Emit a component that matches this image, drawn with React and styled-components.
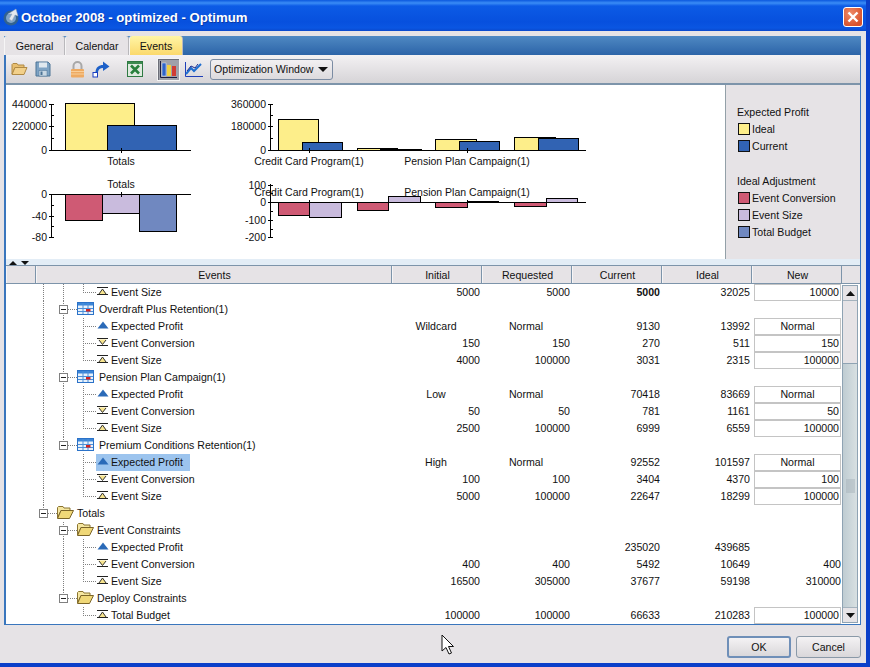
import React from 'react'
import styled, { createGlobalStyle } from 'styled-components'

const font = '"Liberation Sans", Arial, sans-serif'
const gray = '#e6e3e6'
const edge = '#3a76bd'
const yellow = '#fdee8a'
const blue = '#3163b3'
const red = '#cf5a74'
const purple = '#c9bbdd'
const steel = '#7088c0'

const Global = createGlobalStyle`
  html, body { margin: 0; padding: 0; background: ${gray}; }
  * { box-sizing: border-box; }
`
const Window = styled.div`
  position: relative;
  width: 870px;
  height: 667px;
  display: flex;
  flex-direction: column;
  overflow: hidden;
  background: ${gray};
  border-right: 4px solid #0b3fc9;
  border-bottom: 4px solid #0b3fc9;
  font: 10.6px ${font};
  color: #111;
`
const TitleBar = styled.header`
  height: 31px;
  margin-right: -4px;
  flex: none;
  display: flex;
  align-items: center;
  padding: 3px 7px 0 3px;
  background: linear-gradient(#0b58de 0, #3a8cf6 3px, #0c5be6 6px, #0750de 22px, #0a56e2 28px, #0a48cc 31px);
`
const Title = styled.h1`
  flex: 1;
  margin: 0 0 0 1px;
  font: bold 13.2px ${font};
  color: #fff;
  text-shadow: 1px 1px 0 #0a3aa8;
`
const CloseButton = styled.button`
  width: 20px;
  height: 20px;
  padding: 0;
  display: flex;
  align-items: center;
  justify-content: center;
  border: 1px solid #fff;
  border-radius: 3px;
  background: radial-gradient(circle at 35% 30%, #ef8a68, #d8522c 75%);
`
const Body = styled.div`
  flex: 1;
  min-height: 0;
  display: flex;
  flex-direction: column;
  padding: 5px 5px 0 4px;
`
const Panel = styled.main`
  height: 589px;
  flex: none;
  display: flex;
  flex-direction: column;
  border-left: 2px solid ${edge};
  border-right: 1px solid ${edge};
  border-bottom: 1px solid ${edge};
  background: #fff;
`
const TabStrip = styled.nav`
  height: 19px;
  flex: none;
  margin-left: -2px;
  margin-right: -1px;
  display: flex;
  background: linear-gradient(#4f89c3, #2c64a8);
`
const Tab = styled.div`
  display: flex;
  align-items: center;
  justify-content: center;
  width: ${p => p.$w}px;
  border-right: 1px solid #b9b8bc;
  border-left: 1px solid #f6f5f6;
  border-radius: 3px 3px 0 0;
  background: ${p => (p.$active ? 'linear-gradient(#fff5a6, #fbd96c)' : gray)};
`
const Toolbar = styled.div`
  height: 30px;
  flex: none;
  display: flex;
  align-items: center;
  padding-left: 4px;
  background: linear-gradient(#f3f1f3, #d6d4d7);
  border-bottom: 2px solid #7d94aa;
`
const ToolIcon = styled.span`
  display: flex;
  align-items: center;
  justify-content: center;
  flex: none;
  width: 18px;
  height: 23px;
  margin-left: ${p => p.$gap}px;
`
const PressedTool = styled(ToolIcon)`
  width: 23px;
  background: #9fa1aa;
  border: 1px solid #f4f4f4;
  box-shadow: inset 1px 1px 0 #6c6e78;
`
const Combo = styled.div`
  width: 123px;
  height: 21px;
  margin-left: 7px;
  display: flex;
  align-items: center;
  justify-content: space-between;
  padding: 0 4px 0 3px;
  border: 1px solid #7b8ca3;
  border-radius: 3px;
  background: linear-gradient(#f2f0f2, #dcdadd);
`
const Caret = styled.span`
  width: 0;
  height: 0;
  border-left: 5px solid transparent;
  border-right: 5px solid transparent;
  border-top: 5px solid #111;
`
const ChartPane = styled.section`
  height: 174px;
  flex: none;
  display: flex;
`
const ChartGrid = styled.div`
  width: 719px;
  flex: none;
  display: grid;
  grid-template-columns: 205px 514px;
  grid-template-rows: 87px 87px;
`
const ChartSvg = styled.svg`
  display: block;
  overflow: visible;
  font: 10.5px ${font};
  fill: #111;
`
const Legend = styled.aside`
  flex: 1;
  padding: 19px 0 0 11px;
  background: ${gray};
  border-left: 1px solid #93a0a8;
`
const LegendGroup = styled.div`
  height: 69px;
  display: flex;
  flex-direction: column;
`
const LegendHead = styled.div`
  height: 16px;
  display: flex;
  align-items: center;
`
const LegendItem = styled.div`
  height: 17px;
  display: flex;
  align-items: center;
  gap: 2px;
  padding-left: 1px;
`
const Swatch = styled.span`
  width: 12px;
  height: 12px;
  flex: none;
  background: ${p => p.$color};
  border: 1px solid #111;
`
const SplitBand = styled.div`
  height: 6px;
  flex: none;
  display: flex;
  align-items: flex-end;
  gap: 4px;
  padding-left: 3px;
  background: #e3edf6;
`
const Arrow = styled.span`
  width: 0;
  height: 0;
  border-left: 4px solid transparent;
  border-right: 4px solid transparent;
  ${p => (p.$up ? 'border-bottom: 4px solid #111;' : 'border-top: 4px solid #111;')}
`
const HeaderRow = styled.div`
  height: 19px;
  flex: none;
  display: flex;
  border-top: 1px solid #7d94aa;
  border-bottom: 1px solid #7d94aa;
  background: ${gray};
`
const HeaderCell = styled.div`
  width: ${p => p.$w}px;
  flex: none;
  display: flex;
  align-items: center;
  justify-content: center;
  padding: 1px 0 0 2px;
  border-right: 1px solid #7d94aa;
  box-shadow: inset 1px 0 0 #f6f5f6;
`
const TableBody = styled.div`
  flex: 1;
  min-height: 0;
  display: flex;
`
const Rows = styled.div`
  width: 836px;
  flex: none;
`
const Row = styled.div`
  height: 17px;
  display: flex;
  align-items: center;
`
const TreeCell = styled.div`
  width: 386px;
  height: 17px;
  flex: none;
  display: flex;
  align-items: center;
  padding-left: 27px;
`
const dots = 'repeating-linear-gradient(#808080 0 1px, transparent 1px 2px)'
const dotsH = 'repeating-linear-gradient(90deg, #808080 0 1px, transparent 1px 2px)'
const Guide = styled.span`
  width: 20px;
  height: 17px;
  flex: none;
  background: ${p => (p.$on ? `${dots} 10px 0 / 1px 100% no-repeat` : 'none')};
`
const Elbow = styled.span`
  width: 24px;
  height: 17px;
  flex: none;
  background:
    ${dotsH} 10px 8px / 14px 1px no-repeat,
    ${dots} 10px 0 / 1px ${p => (p.$last ? '9px' : '100%')} no-repeat;
`
const Expander = styled.span`
  width: 24px;
  height: 17px;
  flex: none;
  display: flex;
  align-items: center;
  padding-left: 6px;
  background:
    ${dotsH} 15px 8px / 9px 1px no-repeat,
    ${dots} 10px 0 / 1px ${p => (p.$last ? '4px' : '100%')} no-repeat;
`
const MinusBox = styled.span`
  width: 9px;
  height: 9px;
  margin-bottom: 1px;
  display: flex;
  align-items: center;
  justify-content: center;
  background: #fff;
  border: 1px solid #808080;
  &::before {
    content: '';
    width: 5px;
    height: 1px;
    background: #222;
  }
`
const LeafIcon = styled.span`
  width: 14px;
  flex: none;
  display: flex;
  margin-bottom: 2px;
`
const GroupIcon = styled.span`
  width: 17px;
  margin: 0 ${p => p.$gap}px 2px 0;
  flex: none;
  display: flex;
`
const Label = styled.span`
  margin-bottom: 2px;
  white-space: nowrap;
`
const SelectedWrap = styled.div`
  height: 17px;
  display: flex;
  align-items: center;
  margin-left: -1px;
  padding: 0 7px 0 1px;
  background: ${p => (p.$selected ? '#9cc4ee' : 'transparent')};
`
const NumCell = styled.div`
  width: 90px;
  flex: none;
  padding-right: 2px;
  margin-bottom: 2px;
  text-align: ${p => (p.$text ? 'center' : 'right')};
  font-weight: ${p => (p.$bold ? 'bold' : 'normal')};
`
const NewCell = styled.div`
  width: 90px;
  height: 17px;
  flex: none;
  display: flex;
  align-items: center;
  justify-content: flex-end;
  padding: 0 1px 0 2px;
`
const PlainNew = styled.span`
  margin-bottom: 2px;
`
const NewInput = styled.div`
  width: 87px;
  height: 17px;
  padding: 0 1px;
  line-height: 14px;
  border: 1px solid #c4c4c4;
  background: #fff;
  text-align: ${p => (p.$text ? 'center' : 'right')};
`
const ScrollBar = styled.div`
  width: 16px;
  flex: none;
  display: flex;
  flex-direction: column;
  height: 338px;
  margin-top: 1px;
  border: 1px solid #8fa3b3;
  background: ${gray};
`
const ScrollButton = styled.div`
  height: 15px;
  flex: none;
  display: flex;
  align-items: center;
  justify-content: center;
  background: ${gray};
  border-bottom: 1px solid #a4b2bd;
`
const ScrollButtonDown = styled(ScrollButton)`
  border-bottom: 0;
  border-top: 1px solid #a4b2bd;
`
const ScrollTrack = styled.div`
  height: 62px;
  flex: none;
`
const ScrollThumb = styled.div`
  flex: 1;
  display: flex;
  align-items: center;
  justify-content: center;
  border-top: 1px solid #8fa3b3;
  background: linear-gradient(90deg, #bfccd2, #d8e0e2);
`
const Grip = styled.span`
  width: 9px;
  height: 14px;
  background: radial-gradient(circle, #a4b0b8 0.6px, transparent 0.8px) 0 0 / 2px 2px;
`
const Footer = styled.footer`
  flex: 1;
  display: flex;
  justify-content: flex-end;
  gap: 5px;
  padding-top: 11px;
`
const Button = styled.button`
  width: ${p => p.$w}px;
  height: 22px;
  padding: 0;
  font: 10.6px ${font};
  color: #111;
  border-radius: 3px;
  border: ${p => (p.$primary ? '2px solid #6f8fb8' : '1px solid #8a99a8')};
  background: linear-gradient(#f4f2f4, #d9d7da);
`
const Cursor = styled.svg`
  position: absolute;
  left: 441px;
  top: 634px;
`

const Chart = ({ x, y, w, h, children }) => (
  <ChartSvg width={w} height={h} viewBox={`${x} ${y} ${w} ${h}`}>{children}</ChartSvg>
)

const Bar = ({ x1, x2, y1, y2, color }) => (
  <rect x={x1 + 0.5} y={y1 + 0.5} width={x2 - x1} height={y2 - y1} fill={color} stroke="#000" />
)

// vertical axis with major ticks (with label) and minor ticks
const Axis = ({ x, majors, minors, top, bottom }) => (
  <g>
    <line x1={x + 0.5} x2={x + 0.5} y1={top} y2={bottom} stroke="#000" />
    {majors.map(([y, label]) => (
      <g key={label}>
        <line x1={x - 2} x2={x + 3} y1={y + 0.5} y2={y + 0.5} stroke="#000" />
        <text x={x - 4} y={y + 4} textAnchor="end">{label}</text>
      </g>
    ))}
    {minors.map(y => <line key={y} x1={x} x2={x + 3} y1={y + 0.5} y2={y + 0.5} stroke="#000" />)}
  </g>
)

const Baseline = ({ x1, x2, y, ticks }) => (
  <g>
    <line x1={x1} x2={x2} y1={y + 0.5} y2={y + 0.5} stroke="#000" />
    {ticks.map(t => <line key={t} x1={t + 0.5} x2={t + 0.5} y1={y - 2} y2={y + 3} stroke="#000" />)}
  </g>
)

const CatLabel = ({ x, y, children }) => <text x={x} y={y} textAnchor="middle">{children}</text>

const Charts = () => (
  <ChartGrid>
    <Chart x={6} y={85} w={205} h={87}>
      <Bar x1={65} x2={134} y1={103} y2={150} color={yellow} />
      <Bar x1={107} x2={176} y1={125} y2={150} color={blue} />
      <Axis x={51} top={104} bottom={151} majors={[[104, '440000'], [126, '220000'], [150, '0']]} minors={[115, 138]} />
      <Baseline x1={51} x2={191} y={150} ticks={[121]} />
      <CatLabel x={121} y={165}>Totals</CatLabel>
    </Chart>
    <Chart x={211} y={85} w={514} h={87}>
      <Bar x1={278} x2={318} y1={119} y2={150} color={yellow} />
      <Bar x1={302} x2={342} y1={142} y2={150} color={blue} />
      <Bar x1={357} x2={397} y1={148} y2={150} color={yellow} />
      <Bar x1={380} x2={421} y1={149} y2={150} color={blue} />
      <Bar x1={435} x2={476} y1={139} y2={150} color={yellow} />
      <Bar x1={459} x2={499} y1={141} y2={150} color={blue} />
      <Bar x1={514} x2={555} y1={137} y2={150} color={yellow} />
      <Bar x1={538} x2={578} y1={138} y2={150} color={blue} />
      <Axis x={270} top={104} bottom={151} majors={[[104, '360000'], [126, '180000'], [150, '0']]} minors={[115, 138]} />
      <Baseline x1={270} x2={586} y={150} ticks={[309, 467]} />
      <CatLabel x={309} y={165}>Credit Card Program(1)</CatLabel>
      <CatLabel x={467} y={165}>Pension Plan Campaign(1)</CatLabel>
    </Chart>
    <Chart x={6} y={172} w={205} h={87}>
      <Bar x1={65} x2={102} y1={194} y2={220} color={red} />
      <Bar x1={102} x2={139} y1={194} y2={213} color={purple} />
      <Bar x1={139} x2={176} y1={194} y2={231} color={steel} />
      <Axis x={51} top={194} bottom={238} majors={[[194, '0'], [216, '-40'], [237, '-80']]} minors={[205, 226]} />
      <Baseline x1={51} x2={191} y={194} ticks={[121]} />
      <CatLabel x={121} y={188}>Totals</CatLabel>
    </Chart>
    <Chart x={211} y={172} w={514} h={87}>
      <Bar x1={278} x2={309} y1={202} y2={215} color={red} />
      <Bar x1={309} x2={341} y1={202} y2={217} color={purple} />
      <Bar x1={357} x2={388} y1={202} y2={210} color={red} />
      <Bar x1={388} x2={420} y1={196} y2={202} color={purple} />
      <Bar x1={435} x2={467} y1={202} y2={207} color={red} />
      <Bar x1={467} x2={498} y1={201} y2={202} color={purple} />
      <Bar x1={514} x2={546} y1={202} y2={206} color={red} />
      <Bar x1={546} x2={577} y1={198} y2={202} color={purple} />
      <Axis x={270} top={184} bottom={238} majors={[[185, '100'], [202, '0'], [220, '-100'], [237, '-200']]} minors={[193, 211, 229]} />
      <Baseline x1={270} x2={586} y={202} ticks={[309, 467]} />
      <CatLabel x={309} y={196}>Credit Card Program(1)</CatLabel>
      <CatLabel x={467} y={196}>Pension Plan Campaign(1)</CatLabel>
    </Chart>
  </ChartGrid>
)

const AppIcon = () => (
  <svg width="17" height="19" viewBox="0 0 17 19">
    <circle cx="8" cy="10" r="7.5" fill="#33628f" />
    <circle cx="8" cy="10" r="5" fill="#7fa3c8" />
    <path d="M5 6 L13 1 L15 8 L12 7 L9 13 L6 11 L9 6 Z" fill="#e4e8ee" stroke="#8fa0b4" strokeWidth=".5" />
  </svg>
)

const CloseIcon = () => (
  <svg width="12" height="12" viewBox="0 0 12 12">
    <path d="M1.5 1.5 L10.5 10.5 M10.5 1.5 L1.5 10.5" stroke="#fff" strokeWidth="2.4" />
  </svg>
)

const OpenFolderIcon = () => (
  <svg width="17" height="14" viewBox="0 0 17 14">
    <path d="M1 12 V2.5 L2 1.5 H6 L7 3 H13 V5.5 H4 Z" fill="#e8bf70" stroke="#b08a45" />
    <path d="M1 12.5 L4 5.5 H16 L13 12.5 Z" fill="#f2d08a" stroke="#b08a45" />
  </svg>
)

const SaveIcon = () => (
  <svg width="16" height="16" viewBox="0 0 16 16">
    <path d="M1 1 H13 L15 3 V15 H1 Z" fill="#7ea3c4" stroke="#4d7496" />
    <rect x="4" y="1.5" width="8" height="5" fill="#dfe8ef" />
    <rect x="4" y="9.5" width="8" height="5.5" fill="#c9d8e4" stroke="#4d7496" strokeWidth=".5" />
    <rect x="5.5" y="10.5" width="2" height="3.5" fill="#4d7496" />
  </svg>
)

const LockIcon = () => (
  <svg width="15" height="17" viewBox="0 0 15 17">
    <path d="M3.5 8 V5 A4 4 0 0 1 11.5 5 V8" fill="none" stroke="#a8a8a8" strokeWidth="2" />
    <rect x="1" y="8" width="13" height="8.5" rx="1" fill="#eeaa62" />
    <path d="M1 10.5 H14 M1 13 H14" stroke="#f8cf9a" />
  </svg>
)

const ShareIcon = () => (
  <svg width="18" height="18" viewBox="0 0 18 18">
    <rect x="1" y="12.5" width="4.5" height="4.5" fill="#fff" stroke="#1a3fc0" />
    <path d="M3.5 12 C4 7 7 5 11 5 V1.5 L17.5 6.5 L11 11 V8 C8 8 6.5 9.5 6 12 Z" fill="#1d60c8" />
  </svg>
)

const ExcelIcon = () => (
  <svg width="16" height="16" viewBox="0 0 16 16">
    <rect x=".5" y=".5" width="15" height="15" fill="#dfeadf" stroke="#2e7a42" />
    <rect x="1" y="1" width="14" height="2" fill="#3d8a50" />
    <path d="M4 4.5 L12 12.5 M12 4.5 L4 12.5" stroke="#28803c" strokeWidth="2.6" />
  </svg>
)

const BarsIcon = () => (
  <svg width="17" height="19" viewBox="0 0 17 19">
    <rect x="2" y="3" width="4" height="13" fill="#2f63c8" stroke="#e8eef8" strokeWidth=".5" />
    <rect x="7" y="5" width="4" height="11" fill="#f0d040" />
    <rect x="12" y="6" width="4" height="10" fill="#d03c34" />
    <path d="M.5 1 V17.5 H17" stroke="#1a1a40" fill="none" />
  </svg>
)

const LinesIcon = () => (
  <svg width="18" height="17" viewBox="0 0 18 17">
    <path d="M.5 1 V15.5 H18" stroke="#1f3fb8" fill="none" />
    <path d="M1 13 L6 7 L9 10 L16 3" stroke="#1f6fd0" strokeWidth="2" fill="none" />
    <path d="M2 10 L6 5 L10 7 L13 3" stroke="#1a2a90" fill="none" />
  </svg>
)

const TableIcon = () => (
  <svg width="17" height="13" viewBox="0 0 17 13">
    <rect x=".5" y=".5" width="16" height="12" fill="#e8f2fc" stroke="#2b72c8" />
    <rect x="1" y="1" width="15" height="2.5" fill="#3c86d8" />
    <path d="M6 1 V12 M11 1 V12 M1 6.5 H16 M1 9.5 H16" stroke="#4c8fd8" />
    <rect x="9" y="7" width="4.5" height="2.5" fill="#d42020" />
  </svg>
)

const TreeFolderIcon = () => (
  <svg width="17" height="13" viewBox="0 0 17 13">
    <path d="M.5 12 V1.5 L1.5 .5 H6 L7 2 H13 V4.5 H4 Z" fill="#f5e6a0" stroke="#8a7430" />
    <path d="M.5 12.5 L4 4.5 H16.5 L12.5 12.5 Z" fill="#f0d878" stroke="#7a6428" />
  </svg>
)

const ProfitIcon = () => (
  <svg width="12" height="9" viewBox="0 0 12 9">
    <path d="M6 .5 L11.5 7.5 H.5 Z" fill="#2a6ab8" />
  </svg>
)

const ConversionIcon = () => (
  <svg width="11" height="9" viewBox="0 0 11 9">
    <path d="M1.5 1.5 H9.5 L5.5 6.5 Z" fill="#f7e48e" />
    <path d="M0 .5 H11 M0 7.5 H11" stroke="#222" />
    <path d="M2 2 L5.5 6.5 L9 2" stroke="#333" fill="none" />
  </svg>
)

const SizeIcon = () => (
  <svg width="11" height="9" viewBox="0 0 11 9">
    <path d="M1.5 7 H9.5 L5.5 2 Z" fill="#f7e48e" />
    <path d="M0 .5 H11 M0 7.5 H11" stroke="#222" />
    <path d="M2 7 L5.5 2 L9 7" stroke="#333" fill="none" />
  </svg>
)

const ScrollArrow = ({ down }) => (
  <svg width="9" height="5" viewBox="0 0 9 5">
    <path d={down ? 'M0 0 H9 L4.5 5 Z' : 'M0 5 H9 L4.5 0 Z'} fill="#111" />
  </svg>
)

const leafIcons = { profit: <ProfitIcon />, conv: <ConversionIcon />, size: <SizeIcon /> }
const leafNames = { profit: 'Expected Profit', conv: 'Event Conversion', size: 'Event Size' }

const leaf = (kind, g, last, vals, extra = {}) => ({ type: 'leaf', kind, g, last, vals, ...extra })
const group = (label, g, last, icon) => ({ type: 'group', label, g, last, icon })

const rows = [
  leaf('size', [1, 1], true, [5000, 5000, 5000, 32025, 10000], { input: true, boldCurrent: true }),
  group('Overdraft Plus Retention(1)', [1], false, 'table'),
  leaf('profit', [1, 1], false, ['Wildcard', 'Normal', 9130, 13992, 'Normal'], { input: true }),
  leaf('conv', [1, 1], false, [150, 150, 270, 511, 150], { input: true }),
  leaf('size', [1, 1], true, [4000, 100000, 3031, 2315, 100000], { input: true }),
  group('Pension Plan Campaign(1)', [1], false, 'table'),
  leaf('profit', [1, 1], false, ['Low', 'Normal', 70418, 83669, 'Normal'], { input: true }),
  leaf('conv', [1, 1], false, [50, 50, 781, 1161, 50], { input: true }),
  leaf('size', [1, 1], true, [2500, 100000, 6999, 6559, 100000], { input: true }),
  group('Premium Conditions Retention(1)', [1], true, 'table'),
  leaf('profit', [1, 0], false, ['High', 'Normal', 92552, 101597, 'Normal'], { input: true, selected: true }),
  leaf('conv', [1, 0], false, [100, 100, 3404, 4370, 100], { input: true }),
  leaf('size', [1, 0], true, [5000, 100000, 22647, 18299, 100000], { input: true }),
  { type: 'root', label: 'Totals' },
  group('Event Constraints', [0], false, 'folder'),
  leaf('profit', [0, 1], false, ['', '', 235020, 439685, '']),
  leaf('conv', [0, 1], false, [400, 400, 5492, 10649, 400]),
  leaf('size', [0, 1], true, [16500, 305000, 37677, 59198, 310000]),
  group('Deploy Constraints', [0], true, 'folder'),
  leaf('size', [0, 0], true, [100000, 100000, 66633, 210283, 100000], { input: true, name: 'Total Budget' }),
]

const isText = v => typeof v === 'string'

const TreeRow = ({ row }) => {
  const vals = row.vals || ['', '', '', '', '']
  return (
    <Row>
      <TreeCell>
        {row.type === 'root' && (
          <>
            <Expander $last><MinusBox /></Expander>
            <GroupIcon $gap={3}><TreeFolderIcon /></GroupIcon>
            <Label>{row.label}</Label>
          </>
        )}
        {row.type === 'group' && (
          <>
            <Guide $on={row.g[0]} />
            <Expander $last={row.last}><MinusBox /></Expander>
            <GroupIcon $gap={row.icon === 'table' ? 5 : 3}>
              {row.icon === 'table' ? <TableIcon /> : <TreeFolderIcon />}
            </GroupIcon>
            <Label>{row.label}</Label>
          </>
        )}
        {row.type === 'leaf' && (
          <>
            <Guide $on={row.g[0]} />
            <Guide $on={row.g[1]} />
            <Elbow $last={row.last} />
            <SelectedWrap $selected={row.selected}>
              <LeafIcon>{leafIcons[row.kind]}</LeafIcon>
              <Label>{row.name || leafNames[row.kind]}</Label>
            </SelectedWrap>
          </>
        )}
      </TreeCell>
      <NumCell $text={isText(vals[0])}>{vals[0]}</NumCell>
      <NumCell $text={isText(vals[1])}>{vals[1]}</NumCell>
      <NumCell $bold={row.boldCurrent}>{vals[2]}</NumCell>
      <NumCell>{vals[3]}</NumCell>
      <NewCell>
        {row.input
          ? <NewInput $text={isText(vals[4])}>{vals[4]}</NewInput>
          : <PlainNew>{vals[4]}</PlainNew>}
      </NewCell>
    </Row>
  )
}

const App = () => (
  <Window>
    <Global />
    <TitleBar>
      <AppIcon />
      <Title>October 2008 - optimized - Optimum</Title>
      <CloseButton><CloseIcon /></CloseButton>
    </TitleBar>
    <Body>
      <Panel>
        <TabStrip>
          <Tab $w={61}>General</Tab>
          <Tab $w={64}>Calendar</Tab>
          <Tab $w={54} $active>Events</Tab>
        </TabStrip>
        <Toolbar>
          <ToolIcon $gap={0}><OpenFolderIcon /></ToolIcon>
          <ToolIcon $gap={6}><SaveIcon /></ToolIcon>
          <ToolIcon $gap={16}><LockIcon /></ToolIcon>
          <ToolIcon $gap={6}><ShareIcon /></ToolIcon>
          <ToolIcon $gap={16}><ExcelIcon /></ToolIcon>
          <PressedTool $gap={13}><BarsIcon /></PressedTool>
          <ToolIcon $gap={5}><LinesIcon /></ToolIcon>
          <Combo>Optimization Window<Caret /></Combo>
        </Toolbar>
        <ChartPane>
          <Charts />
          <Legend>
            <LegendGroup>
              <LegendHead>Expected Profit</LegendHead>
              <LegendItem><Swatch $color={yellow} />Ideal</LegendItem>
              <LegendItem><Swatch $color={blue} />Current</LegendItem>
            </LegendGroup>
            <LegendGroup>
              <LegendHead>Ideal Adjustment</LegendHead>
              <LegendItem><Swatch $color={red} />Event Conversion</LegendItem>
              <LegendItem><Swatch $color={purple} />Event Size</LegendItem>
              <LegendItem><Swatch $color={steel} />Total Budget</LegendItem>
            </LegendGroup>
          </Legend>
        </ChartPane>
        <SplitBand>
          <Arrow $up />
          <Arrow />
        </SplitBand>
        <HeaderRow>
          <HeaderCell $w={30} />
          <HeaderCell $w={356}>Events</HeaderCell>
          <HeaderCell $w={90}>Initial</HeaderCell>
          <HeaderCell $w={90}>Requested</HeaderCell>
          <HeaderCell $w={90}>Current</HeaderCell>
          <HeaderCell $w={90}>Ideal</HeaderCell>
          <HeaderCell $w={90}>New</HeaderCell>
        </HeaderRow>
        <TableBody>
          <Rows>
            {rows.map((row, i) => <TreeRow key={i} row={row} />)}
          </Rows>
          <ScrollBar>
            <ScrollButton><ScrollArrow /></ScrollButton>
            <ScrollTrack />
            <ScrollThumb><Grip /></ScrollThumb>
            <ScrollButtonDown><ScrollArrow down /></ScrollButtonDown>
          </ScrollBar>
        </TableBody>
      </Panel>
      <Footer>
        <Button $w={64} $primary>OK</Button>
        <Button $w={65}>Cancel</Button>
      </Footer>
    </Body>
    <Cursor width="15" height="22" viewBox="0 0 15 22">
      <path d="M1 1 V17 L5 13.5 L8 20 L10.5 19 L7.5 12.5 H12.5 Z" fill="#fff" stroke="#111" />
    </Cursor>
  </Window>
)

export default App
